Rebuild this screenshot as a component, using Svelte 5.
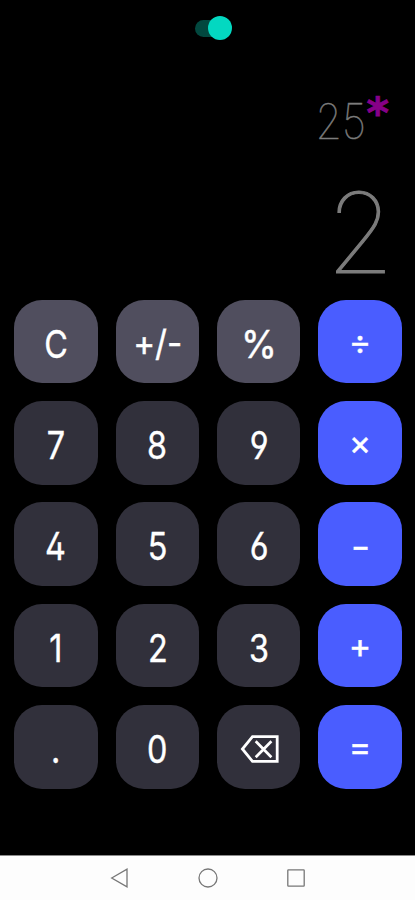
<script lang="ts">
	type Key = {
		label: string;
		kind: 'fn' | 'num' | 'op';
		name?: string;
	};

	const keys: Key[] = [
		{ label: 'C', kind: 'fn', name: 'letter' },
		{ label: '+/-', kind: 'fn', name: 'sign' },
		{ label: '%', kind: 'fn', name: 'percent' },
		{ label: '÷', kind: 'op', name: 'divide' },
		{ label: '7', kind: 'num' },
		{ label: '8', kind: 'num' },
		{ label: '9', kind: 'num' },
		{ label: '×', kind: 'op', name: 'times' },
		{ label: '4', kind: 'num' },
		{ label: '5', kind: 'num' },
		{ label: '6', kind: 'num' },
		{ label: '–', kind: 'op', name: 'minus' },
		{ label: '1', kind: 'num' },
		{ label: '2', kind: 'num' },
		{ label: '3', kind: 'num' },
		{ label: '+', kind: 'op', name: 'plus' },
		{ label: '.', kind: 'num', name: 'dot' },
		{ label: '0', kind: 'num' },
		{ label: 'del', kind: 'num', name: 'del' },
		{ label: '=', kind: 'op', name: 'equals' }
	];

	let previous = $state('25');
	let operator = $state('*');
	let current = $state('2');
	let dark = $state(true);
</script>

<div class="phone">
	<header>
		<button class="switch" class:on={dark} aria-label="dark mode" onclick={() => (dark = !dark)}>
			<span class="thumb"></span>
		</button>
	</header>

	<section class="display">
		<div class="history">
			<span class="value">{previous}</span><span class="operator">{operator}</span>
		</div>
		<div class="current">{current}</div>
	</section>

	<main class="keypad">
		{#each keys as key (key.label + key.kind)}
			<button class="key {key.kind} {key.name ?? ''}" aria-label={key.label}>
				{#if key.name === 'del'}
					<svg width="40" height="30" viewBox="0 0 40 30" fill="none" stroke="#fff">
						<path d="M12.5 2.7H37.2V27.3H12.5L2.4 15Z" stroke-width="2.8" />
						<path d="M15.7 7.2L31.4 23.2M31.4 7.2L15.7 23.2" stroke-width="2.7" />
					</svg>
				{:else}
					<span>{key.label}</span>
				{/if}
			</button>
		{/each}
	</main>

	<nav>
		<svg width="24" height="24" viewBox="0 0 24 24"><path d="M3.7 12L19 3.2V20.8Z" /></svg>
		<svg width="24" height="24" viewBox="0 0 24 24"><circle cx="12" cy="12" r="9" /></svg>
		<svg width="24" height="24" viewBox="0 0 24 24"><rect x="3.8" y="3.8" width="16.4" height="16.4" rx="0.6" /></svg>
	</nav>
</div>

<style>
	:global(body) {
		background: #000;
	}
	.phone {
		display: flex;
		flex-direction: column;
		width: 415px;
		height: 900px;
		overflow: hidden;
		background: #000;
		font-family: Inter, Roboto, sans-serif;
	}
	button {
		border: none;
		padding: 0;
		font: inherit;
		cursor: pointer;
	}

	header {
		display: flex;
		justify-content: center;
		height: 56px;
		align-items: center;
	}
	.switch {
		display: flex;
		align-items: center;
		width: 34px;
		height: 17px;
		margin-left: 9px;
		border-radius: 9px;
		background: #3a3a42;
	}
	.switch.on {
		justify-content: flex-end;
		background: #02483f;
	}
	.thumb {
		flex: none;
		width: 24px;
		height: 24px;
		margin-right: -3px;
		border-radius: 50%;
		background: #03d8c1;
	}

	.display {
		display: flex;
		flex-direction: column;
		align-items: flex-end;
		height: 243.6px;
		color: #7c7c7c;
		font-weight: 100;
	}
	.history {
		display: flex;
		height: 111px;
		padding: 36px 26px 0 0;
		box-sizing: border-box;
		font-size: 49px;
		line-height: 59px;
	}
	.value {
		transform: scaleX(0.87);
		transform-origin: right;
		-webkit-text-stroke: 0.5px #7c7c7c;
	}
	.operator {
		margin-top: -8px;
		color: #870087;
		font-family: 'DejaVu Sans', sans-serif;
		font-size: 43px;
		font-weight: 700;
		-webkit-text-stroke: 0.8px #870087;
	}
	.current {
		padding-right: 21px;
		font-size: 111px;
		line-height: 132px;
		transform: scaleX(0.98);
		transform-origin: calc(100% - 21px) 50%;
		-webkit-text-stroke: 1.2px #7c7c7c;
	}

	.keypad {
		display: grid;
		grid-template-columns: repeat(4, 83.4px);
		grid-auto-rows: 83.6px;
		justify-content: center;
		gap: 17.8px 18px;
		height: 555.4px;
		padding-left: 1px;
	}
	.key {
		display: flex;
		align-items: center;
		justify-content: center;
		border-radius: 28px;
		color: #fff;
		font-size: 38.5px;
		line-height: 1;
	}
	.key span {
		padding-top: 5px;
		transform: scaleX(0.84);
		-webkit-text-stroke: 0.4px #fff;
	}
	.num {
		background: #31303b;
		/* open 4, 6 and 9 */
		font-feature-settings: 'cv02', 'cv03', 'cv04';
	}
	.fn {
		background: #504e5e;
	}
	.op {
		background: #4a5dff;
		font-size: 34px;
	}
	.key.op span {
		padding-top: 1px;
		transform: none;
	}
	.key.minus span {
		padding-top: 6px;
		transform: scaleX(0.8);
	}
	.sign {
		font-size: 36px;
	}
	.key.sign span {
		padding-top: 3px;
		transform: scaleX(0.92);
	}
	.key.percent span {
		transform: scaleX(0.95);
	}
	.del svg {
		margin: 4px 0 0 2px;
	}

	nav {
		display: flex;
		flex: 1;
		align-items: center;
		justify-content: center;
		gap: 64px;
		border-top: 1px solid #8b8b8b;
		background: #fdfdfd;
	}
	nav svg {
		fill: none;
		stroke: #777;
		stroke-width: 1.3;
	}
</style>
